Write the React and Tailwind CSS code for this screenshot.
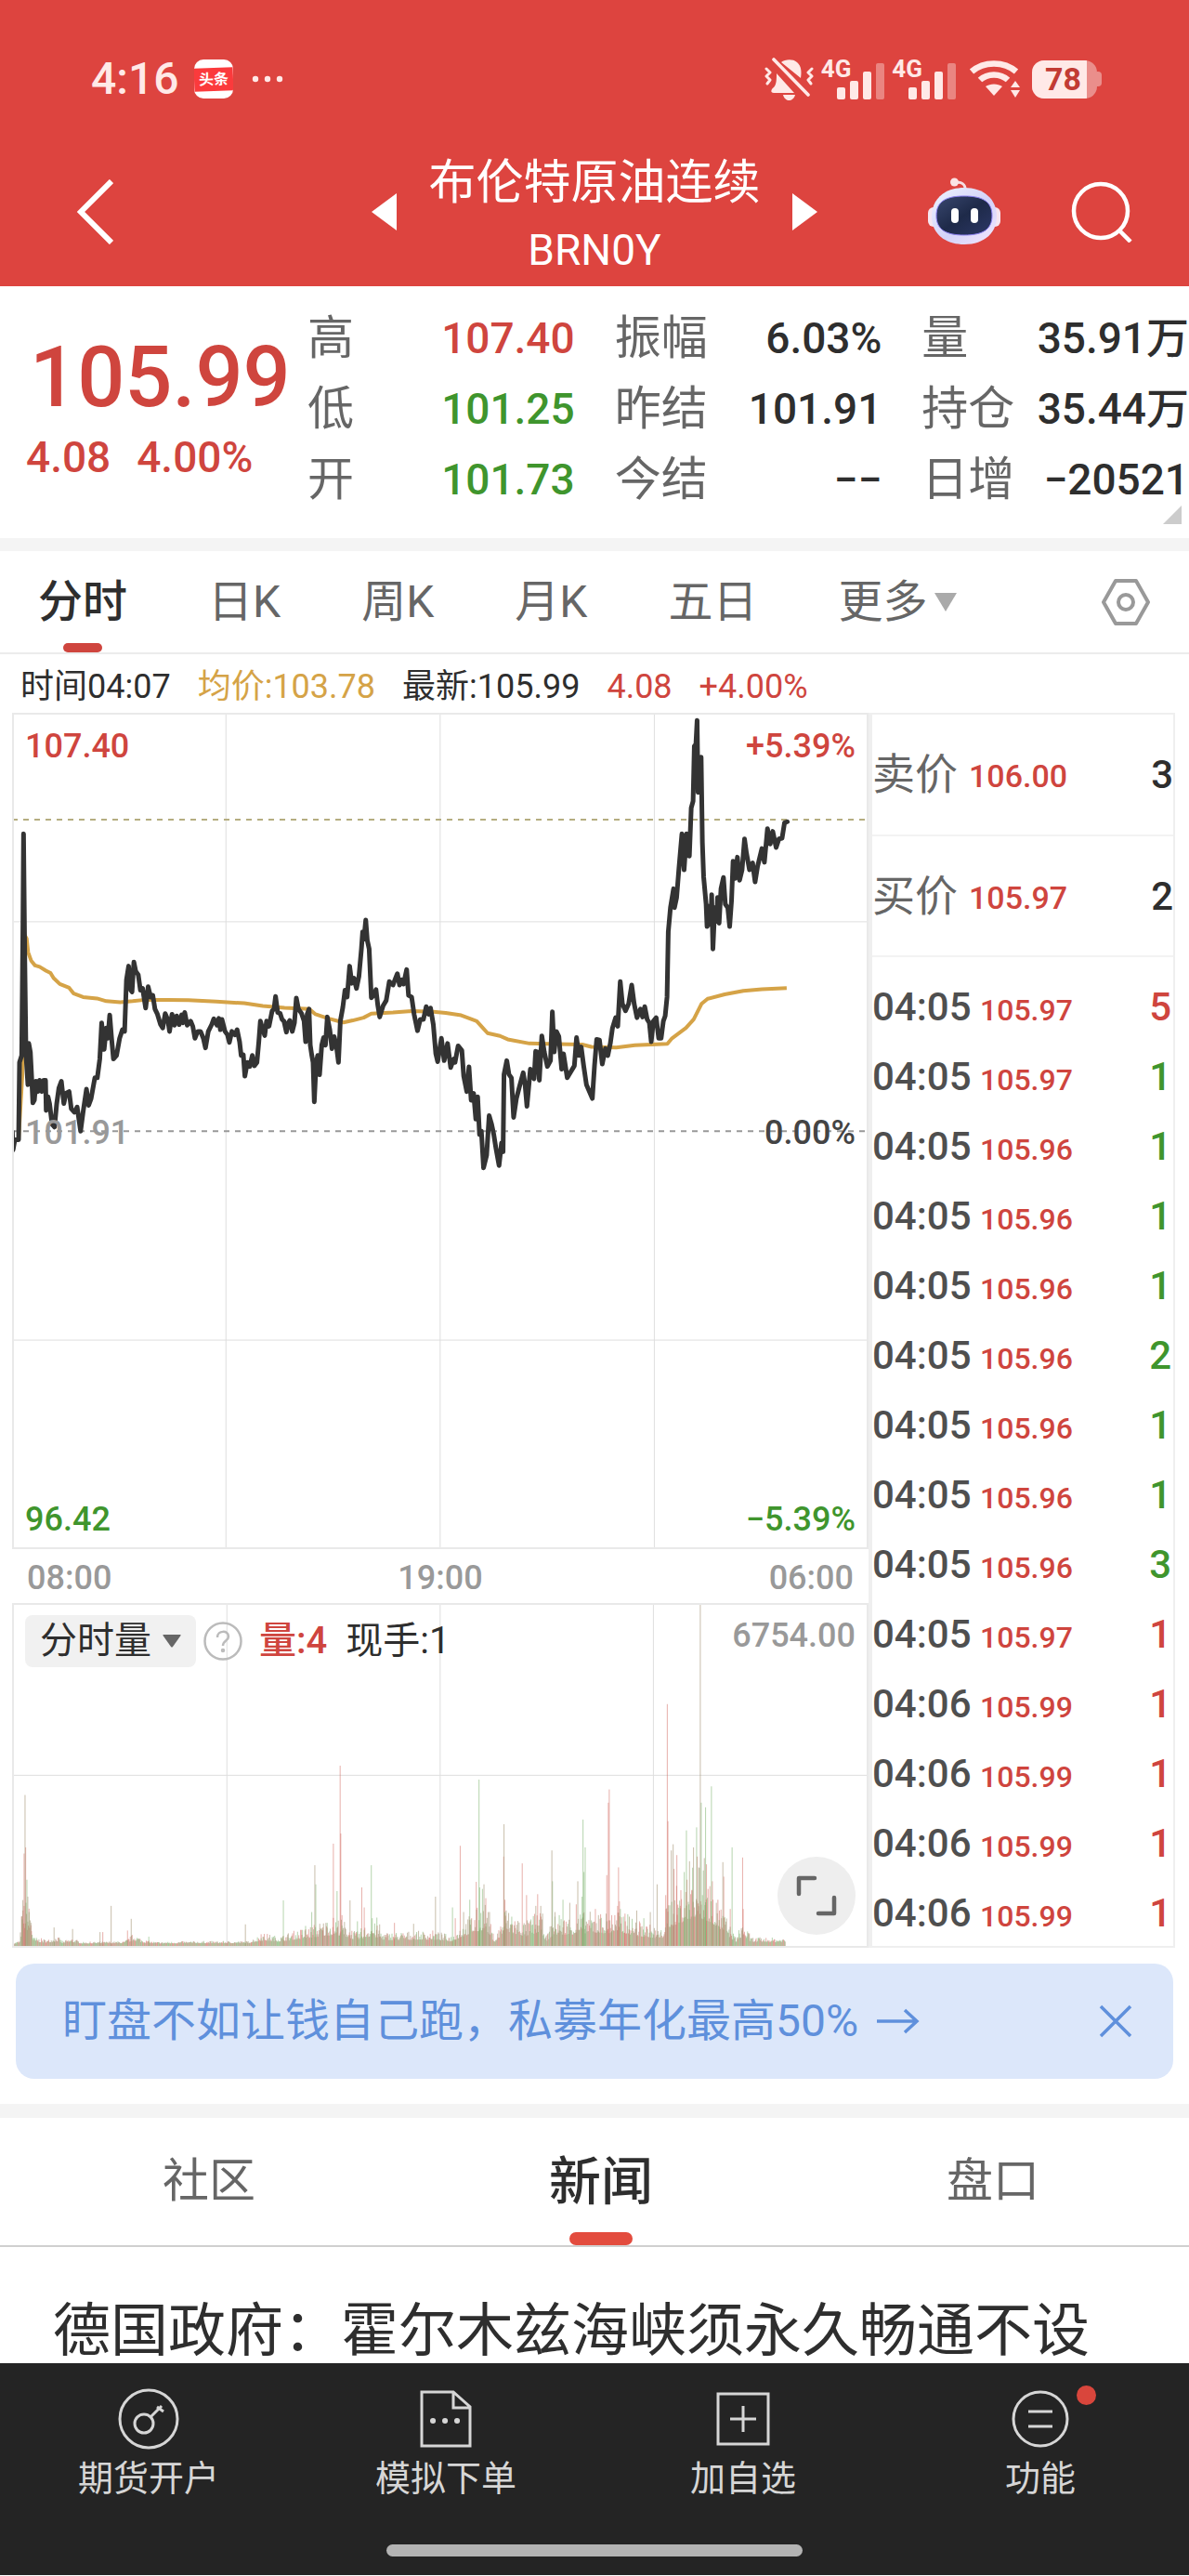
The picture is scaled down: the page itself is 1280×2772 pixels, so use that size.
import { useState, useMemo } from 'react'
import { clsx } from 'clsx'

const STATS = [
  [
    { label: '高', value: '107.40', tone: 'up' },
    { label: '低', value: '101.25', tone: 'down' },
    { label: '开', value: '101.73', tone: 'down' },
  ],
  [
    { label: '振幅', value: '6.03%' },
    { label: '昨结', value: '101.91' },
    { label: '今结', value: '−−' },
  ],
  [
    { label: '量', value: '35.91万' },
    { label: '持仓', value: '35.44万' },
    { label: '日增', value: '−20521' },
  ],
]

const PERIODS = ['分时', '日K', '周K', '月K', '五日']

const QUOTES = [
  { label: '卖价', price: '106.00', qty: 3 },
  { label: '买价', price: '105.97', qty: 2 },
]

const TICKS = [
  { time: '04:05', price: '105.97', qty: 5, tone: 'up' },
  { time: '04:05', price: '105.97', qty: 1, tone: 'down' },
  { time: '04:05', price: '105.96', qty: 1, tone: 'down' },
  { time: '04:05', price: '105.96', qty: 1, tone: 'down' },
  { time: '04:05', price: '105.96', qty: 1, tone: 'down' },
  { time: '04:05', price: '105.96', qty: 2, tone: 'down' },
  { time: '04:05', price: '105.96', qty: 1, tone: 'down' },
  { time: '04:05', price: '105.96', qty: 1, tone: 'down' },
  { time: '04:05', price: '105.96', qty: 3, tone: 'down' },
  { time: '04:05', price: '105.97', qty: 1, tone: 'up' },
  { time: '04:06', price: '105.99', qty: 1, tone: 'up' },
  { time: '04:06', price: '105.99', qty: 1, tone: 'up' },
  { time: '04:06', price: '105.99', qty: 1, tone: 'up' },
  { time: '04:06', price: '105.99', qty: 1, tone: 'up' },
]

const TONES = {
  up: 'text-[#cf453e]',
  down: 'text-[#3f952d]',
}

const PRICE_LINE =
  '42,1402 44,1455 50,1425 62,1425 65,1200 72,1180 76,800 78,535 82,900 86,1180 92,1265 95,1145 100,1170 104,1240 108,1318 113,1310 118,1255 124,1285 130,1252 137,1285 143,1252 149,1252 151,1340 157,1300 162,1320 170,1380 178,1388 185,1320 192,1275 200,1255 208,1320 215,1290 225,1285 232,1335 242,1345 251,1330 262,1400 270,1345 281,1278 288,1325 296,1305 308,1245 316,1245 324,1190 330,1085 338,1162 345,1100 350,1130 356,1062 362,1130 368,1190 378,1180 388,1130 397,1105 404,1110 410,960 417,920 424,990 428,995 434,908 440,935 448,945 455,990 462,985 472,1042 480,980 488,1010 495,1005 502,1045 510,1060 520,1090 527,1100 535,1058 543,1075 549,1110 557,1060 565,1092 572,1065 580,1090 588,1062 592,1085 598,1055 606,1092 617,1080 624,1095 631,1130 640,1110 649,1110 658,1130 665,1158 674,1110 685,1090 692,1073 702,1092 708,1072 713,1105 718,1075 728,1110 736,1120 742,1142 750,1110 760,1120 767,1105 775,1140 780,1180 787,1178 792,1240 800,1200 808,1212 816,1180 823,1210 831,1200 837,1140 842,1080 850,1105 856,1122 862,1080 870,1095 880,1050 886,1045 891,1008 898,1055 906,1058 912,1075 918,1080 926,1112 932,1085 937,1078 945,1110 952,1085 958,1013 965,1045 975,1058 983,1080 988,1140 993,1060 999,1045 1003,1150 1008,1180 1012,1200 1016,1315 1022,1200 1027,1180 1033,1236 1040,1150 1046,1128 1052,1150 1058,1068 1066,1105 1073,1160 1080,1125 1087,1150 1094,1200 1100,1080 1108,1040 1115,990 1122,1010 1130,920 1137,970 1144,955 1152,985 1160,950 1168,870 1172,820 1176,842 1182,786 1187,845 1193,870 1200,1012 1208,1005 1215,988 1221,1035 1227,1068 1238,1035 1248,1020 1258,965 1270,975 1277,958 1284,942 1291,975 1298,960 1304,972 1314,930 1320,1005 1330,1010 1338,1060 1349,1108 1358,1075 1368,1075 1377,1038 1385,1060 1391,1042 1400,1090 1408,1175 1414,1198 1426,1130 1435,1195 1446,1145 1456,1215 1466,1190 1470,1200 1480,1152 1492,1165 1498,1240 1508,1285 1515,1213 1522,1310 1530,1290 1537,1365 1543,1300 1549,1410 1555,1400 1562,1507 1572,1470 1580,1355 1588,1380 1595,1410 1602,1450 1612,1500 1620,1435 1625,1460 1628,1235 1637,1195 1644,1235 1652,1245 1659,1360 1668,1305 1678,1270 1690,1230 1696,1265 1702,1328 1713,1220 1725,1248 1730,1168 1737,1170 1742,1252 1750,1123 1758,1170 1768,1212 1778,1195 1784,1053 1790,1170 1797,1110 1805,1125 1814,1220 1820,1175 1832,1245 1845,1225 1855,1210 1862,1128 1870,1180 1877,1155 1885,1210 1894,1265 1913,1305 1920,1210 1927,1133 1936,1135 1945,1205 1955,1160 1963,1180 1971,1145 1978,1100 1988,1070 1995,1095 2003,965 2010,1030 2020,1050 2030,1030 2040,975 2048,1030 2057,1070 2068,1045 2075,1068 2082,1038 2090,1075 2097,1085 2103,1140 2110,1080 2119,1070 2127,1130 2135,1130 2142,1080 2148,1065 2154,1010 2158,820 2165,750 2175,695 2178,750 2185,720 2192,640 2202,535 2209,640 2217,535 2226,600 2232,460 2238,440 2242,280 2247,275 2251,205 2254,415 2264,312 2268,560 2272,660 2280,740 2283,805 2291,745 2295,800 2298,712 2302,870 2308,750 2314,790 2317,720 2322,795 2328,695 2336,662 2342,740 2350,750 2356,805 2362,730 2367,615 2374,665 2381,603 2388,670 2396,640 2404,550 2410,590 2420,640 2430,620 2438,675 2446,630 2460,578 2468,618 2478,520 2487,565 2495,528 2506,575 2515,550 2525,548 2533,503 2542,500'

const AVERAGE_LINE =
  '62,1425 74,1240 82,830 88,840 93,880 103,905 115,918 130,922 150,933 165,940 175,955 195,972 225,983 240,1000 270,1010 315,1014 345,1022 390,1025 430,1022 470,1018 540,1018 610,1019 700,1023 790,1028 850,1036 920,1041 1000,1045 1020,1060 1060,1072 1110,1084 1140,1078 1175,1070 1200,1058 1270,1055 1330,1051 1400,1053 1440,1056 1490,1063 1540,1080 1555,1095 1575,1115 1615,1123 1640,1133 1710,1145 1800,1147 1880,1148 1910,1155 1990,1157 2050,1150 2155,1146 2170,1130 2215,1100 2240,1075 2265,1030 2285,1015 2340,1002 2400,992 2460,987 2540,984'

// [x, height, r = up / g = down / t = mixed]
const VOLUME_SPIKES = [
  [66, 95, 'r'], [70, 115, 'r'], [74, 300, 'r'], [77, 490, 't'], [79, 320, 'r'], [83, 215, 'g'], [86, 160, 't'], [90, 110, 'g'],
  [96, 75, 't'], [171, 60, 't'], [231, 55, 't'], [320, 45, 't'], [329, 45, 'r'], [356, 130, 't'], [409, 50, 'r'], [421, 88, 't'],
  [478, 30, 'g'], [791, 70, 't'], [842, 38, 'r'], [914, 148, 'g'], [986, 65, 'g'], [1006, 110, 'g'], [1016, 262, 't'], [1019, 200, 'g'],
  [1042, 60, 'r'], [1056, 75, 'g'], [1076, 332, 'r'], [1088, 178, 'g'], [1098, 585, 'r'], [1100, 365, 'r'], [1104, 100, 'r'],
  [1130, 148, 't'], [1154, 80, 'g'], [1168, 190, 'r'], [1176, 125, 'r'], [1199, 262, 'g'], [1202, 90, 'g'], [1217, 92, 'g'],
  [1226, 70, 't'], [1274, 75, 'r'], [1336, 72, 't'], [1407, 160, 't'], [1462, 125, 'g'], [1471, 90, 'r'], [1487, 325, 'r'],
  [1498, 110, 't'], [1518, 150, 'g'], [1539, 208, 'r'], [1548, 540, 'g'], [1550, 190, 'g'], [1559, 185, 'g'], [1564, 200, 't'],
  [1570, 155, 'r'], [1582, 110, 't'], [1629, 395, 't'], [1628, 290, 'r'], [1632, 150, 'r'], [1636, 115, 't'], [1654, 95, 'g'],
  [1688, 268, 'r'], [1702, 165, 'r'], [1732, 130, 't'], [1738, 168, 'r'], [1749, 95, 'r'], [1784, 310, 't'], [1786, 210, 'g'],
  [1794, 110, 't'], [1808, 100, 'g'], [1820, 150, 'g'], [1842, 140, 't'], [1863, 135, 'r'], [1868, 210, 't'], [1882, 160, 'g'],
  [1885, 410, 'g'], [1888, 240, 'g'], [1892, 320, 'g'], [1925, 120, 'r'], [1935, 100, 't'], [1962, 230, 'r'], [1967, 465, 'r'],
  [1970, 508, 'r'], [1978, 100, 'r'], [1997, 130, 'r'], [2000, 255, 'r'], [2003, 145, 'r'], [2021, 105, 'r'], [2035, 95, 't'],
  [2059, 115, 't'], [2082, 90, 'g'], [2103, 110, 't'], [2125, 200, 't'], [2153, 165, 'r'], [2158, 785, 'r'], [2160, 405, 'r'],
  [2171, 310, 't'], [2177, 330, 't'], [2180, 250, 'r'], [2189, 295, 'r'], [2200, 130, 'r'], [2213, 240, 'g'], [2220, 375, 'g'],
  [2230, 275, 't'], [2238, 180, 'r'], [2243, 320, 't'], [2253, 385, 'g'], [2255, 290, 'r'], [2260, 255, 't'], [2265, 1108, 't'],
  [2268, 465, 'g'], [2275, 245, 'g'], [2278, 285, 't'], [2282, 450, 'g'], [2285, 265, 'r'], [2301, 518, 'g'], [2306, 150, 'r'],
  [2317, 140, 't'], [2327, 115, 'r'], [2338, 272, 't'], [2341, 225, 'r'], [2362, 120, 'r'], [2368, 320, 'g'], [2402, 287, 'r'],
  [2404, 120, 'r'],
]

// [x, typical bar height around that minute]
const VOLUME_ENVELOPE = [
  [41, 4], [60, 10], [70, 120], [96, 90], [104, 18], [150, 12], [180, 22], [200, 8], [230, 16], [260, 6], [400, 8], [430, 28],
  [460, 12], [500, 6], [600, 8], [800, 8], [850, 28], [900, 20], [950, 34], [1000, 46], [1080, 70], [1110, 60], [1150, 30],
  [1200, 60], [1240, 30], [1400, 34], [1460, 22], [1500, 60], [1570, 110], [1590, 36], [1600, 15], [1632, 90], [1700, 56],
  [1750, 95], [1765, 20], [1790, 70], [1850, 70], [1880, 80], [1980, 80], [2000, 90], [2060, 60], [2100, 50], [2140, 36],
  [2162, 120], [2250, 200], [2300, 160], [2360, 50], [2380, 16], [2402, 60], [2430, 18], [2542, 16],
]

function buildVolumePaths() {
  const paths = { r: '', g: '', t: '' }
  const floor = 1107
  let seed = 7
  const rand = () => {
    seed = (seed * 16807) % 2147483647
    return seed / 2147483647
  }
  const envelope = (x) => {
    const i = VOLUME_ENVELOPE.findIndex(([px]) => px >= x)
    if (i <= 0) return VOLUME_ENVELOPE[0][1]
    const [x0, h0] = VOLUME_ENVELOPE[i - 1]
    const [x1, h1] = VOLUME_ENVELOPE[i]
    return h0 + ((h1 - h0) * (x - x0)) / (x1 - x0)
  }
  for (let x = 42; x < 2542; x += 2) {
    const r = rand()
    const h = Math.round(5 + envelope(x) * (0.45 + 0.9 * r * r))
    const pick = rand()
    const key = pick < 0.38 ? 'r' : pick < 0.68 ? 'g' : 't'
    paths[key] += `M${x - 41} ${floor}v-${h}`
  }
  VOLUME_SPIKES.forEach(([x, h, key]) => {
    paths[key] += `M${x - 41} ${floor}v-${Math.min(h, floor)}`
  })
  return paths
}

function SignalIcon() {
  return (
    <div className="flex items-start">
      <span className="text-[26px] leading-[22px] font-bold">4G</span>
      <svg viewBox="0 0 52 44" className="-ml-4 w-[52px] h-11" aria-hidden="true">
        <g fill="currentColor">
          <rect x="1" y="31" width="9" height="13" rx="2" />
          <rect x="15" y="24" width="9" height="20" rx="2" />
          <rect x="29" y="14" width="9" height="30" rx="2" />
          <rect x="43" y="5" width="9" height="39" rx="2" opacity="0.4" />
        </g>
      </svg>
    </div>
  )
}

function StatusBar() {
  return (
    <div className="flex items-center justify-between h-[58px] pl-[98px] pr-[94px] text-[#ffe9e7]">
      <div className="flex items-center">
        <span className="text-5xl font-medium">4:16</span>
        <span className="ml-4 w-[42px] h-[42px] rounded-[10px] bg-white overflow-hidden flex items-center">
          <span className="w-full h-[25px] -rotate-2 bg-[#fb3a3c] text-white text-[16px] leading-[25px] text-center font-bold">头条</span>
        </span>
        <svg viewBox="0 0 34 8" className="ml-5 w-[34px] h-2" fill="currentColor" aria-hidden="true">
          <circle cx="4" cy="4" r="3.2" />
          <circle cx="17" cy="4" r="3.2" />
          <circle cx="30" cy="4" r="3.2" />
        </svg>
      </div>
      <div className="flex items-center">
        {/* Muted bell */}
        <svg viewBox="0 0 53 46" className="w-[53px] h-[46px]" fill="none" stroke="currentColor" aria-hidden="true">
          <path fill="currentColor" stroke="none" d="M18 5C22 2 30 1 35 5C40 9 40 16 39 22ZM13 17L32 38H10C6 38 7 34 10 32C13 29 13 23 13 17ZM20 40H33C32 44 29 46 26.500 46C24 46 21 44 20 40Z" />
          <path strokeWidth="3.600" strokeLinecap="round" d="M10 2L47 40" />
          <path strokeWidth="3" strokeLinecap="round" strokeLinejoin="round" d="M2 12L6 16L2 20L6 24L3 28M51 12L47 16L51 20L47 24L50 28" />
        </svg>
        <div className="ml-2"><SignalIcon /></div>
        <div className="ml-2"><SignalIcon /></div>
        <svg viewBox="0 0 56 40" className="ml-3.5 w-14 h-10" aria-hidden="true">
          <g fill="none" stroke="currentColor" strokeWidth="6.500">
            <path d="M3 12C16 0.500 38 0.500 51 12" />
            <path d="M12 21C20 13.500 34 13.500 42 21" />
          </g>
          <path fill="currentColor" d="M18 28C23 24.500 31 24.500 36 28L27 38Z" />
          <path fill="currentColor" d="M45 29L50 22L55 29ZM45 32H55L50 40Z" />
        </svg>
        <div className="ml-3 flex items-center">
          <div className="w-[70px] h-[41px] rounded-[13px] overflow-hidden flex bg-white/40">
            <span className="w-[59px] bg-[#ffe9e7] text-[#c23b34] text-[34px] leading-[41px] font-bold text-center pl-2">78</span>
          </div>
          <span className="w-[5px] h-4 rounded-r-[4px] bg-white/40" />
        </div>
      </div>
    </div>
  )
}

function RobotIcon() {
  return (
    <svg viewBox="0 0 78 74" className="w-[78px] h-[74px]" aria-hidden="true">
      <defs>
        <linearGradient id="robotHead" x1="0" y1="0" x2="1" y2="1">
          <stop offset="0" stopColor="#eef3ff" />
          <stop offset="0.55" stopColor="#d3d3f8" />
          <stop offset="1" stopColor="#f4e8ff" />
        </linearGradient>
        <linearGradient id="robotFace" x1="0" y1="0" x2="1" y2="1">
          <stop offset="0" stopColor="#39476f" />
          <stop offset="0.5" stopColor="#1e2a49" />
          <stop offset="1" stopColor="#2c3766" />
        </linearGradient>
      </defs>
      <path d="M40 14C41 7 35 4 30 6" fill="none" stroke="#f5dfe4" strokeWidth="3" />
      <circle cx="28.500" cy="5" r="4.500" fill="#fbe3e4" />
      <rect x="0" y="32" width="12" height="21" rx="6" fill="#f6e6f0" />
      <rect x="66" y="32" width="12" height="21" rx="6" fill="#f6e6f0" />
      <path d="M39 11C60 11 74 23 74 42C74 60 60 72 39 72C18 72 4 60 4 42C4 23 18 11 39 11Z" fill="url(#robotHead)" />
      <path d="M39 20C59 20 69 26 69 41C69 56 59 62 39 62C19 62 9 56 9 41C9 26 19 20 39 20Z" fill="url(#robotFace)" stroke="#8a7ff0" strokeWidth="1" />
      <rect x="25" y="33" width="8" height="16" rx="4" fill="#fff" />
      <rect x="46" y="33" width="8" height="16" rx="4" fill="#fff" />
    </svg>
  )
}

function TitleBar() {
  return (
    <div className="mt-[34px] h-[160px] grid grid-cols-[1fr_480px_1fr] items-center">
      <button aria-label="返回" className="justify-self-start ml-[82px]">
        <svg viewBox="0 0 40 70" className="w-10 h-[70px]" fill="none" stroke="currentColor" strokeWidth="6" aria-hidden="true">
          <path d="M38 2L5 35L38 68" />
        </svg>
      </button>
      <div className="flex items-center justify-between">
        <button aria-label="上一个">
          <svg viewBox="0 0 27 40" className="w-[27px] h-10" fill="currentColor" aria-hidden="true"><path d="M27 0V40L0 20Z" /></svg>
        </button>
        <h1 className="pt-2.5 text-center">
          <span className="block text-[51px] leading-[73px]">布伦特原油连续</span>
          <span className="block text-[46px] leading-[73px]">BRN0Y</span>
        </h1>
        <button aria-label="下一个">
          <svg viewBox="0 0 27 40" className="w-[27px] h-10" fill="currentColor" aria-hidden="true"><path d="M0 0V40L27 20Z" /></svg>
        </button>
      </div>
      <div className="flex items-center justify-end gap-[76px] pr-[61px]">
        <button aria-label="智能助手"><RobotIcon /></button>
        <button aria-label="搜索">
          <svg viewBox="0 0 66 66" className="w-[66px] h-[66px]" fill="none" stroke="currentColor" strokeWidth="4.500" aria-hidden="true">
            <circle cx="32" cy="32" r="29" />
            <path d="M51 52L64 65" />
          </svg>
        </button>
      </div>
    </div>
  )
}

function QuoteSummary() {
  return (
    <section className="relative h-[271px] pt-[18px] flex font-medium">
      <div className="w-[331px] shrink-0 pl-7 text-[#cf453e]">
        <div className="mt-[26px] pl-1 text-[90px] leading-[110px]">105.99</div>
        <div className="flex gap-[28px] text-[46px] leading-[60px]">
          <span>4.08</span>
          <span>4.00%</span>
        </div>
      </div>
      <div className="flex-1 grid grid-cols-3 gap-x-[43px]">
        {STATS.map((column) => (
          <dl key={column[0].label}>
            {column.map((item) => (
              <div key={item.label} className="flex items-center justify-between h-[76px] whitespace-nowrap">
                <dt className="text-[50px] font-normal text-[#666]">{item.label}</dt>
                <dd className={clsx('text-[46px]', item.tone ? TONES[item.tone] : 'text-[#2e2e2e]')}>{item.value}</dd>
              </div>
            ))}
          </dl>
        ))}
      </div>
      <svg viewBox="0 0 20 20" className="absolute right-2 bottom-[15px] w-5 h-5" aria-hidden="true">
        <path d="M20 0V20H0Z" fill="#ccc" />
      </svg>
    </section>
  )
}

function PeriodTabs() {
  const [active, setActive] = useState('分时')

  return (
    <nav className="h-[111px] pl-[41px] pr-[42px] flex items-stretch gap-[87px] border-b-2 border-[#ececec] text-5xl text-[#666] whitespace-nowrap">
      {PERIODS.map((name) => (
        <button
          key={name}
          onClick={() => setActive(name)}
          className={clsx('relative', active === name && 'font-medium text-[#2e2e2e]')}
        >
          {name}
          {active === name && (
            <span className="absolute bottom-0 left-1/2 -translate-x-1/2 w-[42px] h-2.5 rounded-[5px] bg-[#cf453e]" />
          )}
        </button>
      ))}
      <button className="flex items-center gap-2">
        更多
        <svg viewBox="0 0 24 20" className="w-6 h-5" aria-hidden="true"><path d="M0 0H24L12 20Z" fill="#aaa" /></svg>
      </button>
      <button aria-label="设置" className="ml-auto">
        <svg viewBox="0 0 52 50" className="w-[52px] h-[50px]" fill="none" stroke="#999" strokeWidth="4" strokeLinejoin="round" aria-hidden="true">
          <path d="M15 2H37L50 25L37 48H15L2 25Z" />
          <circle cx="26" cy="25" r="8" />
        </svg>
      </button>
    </nav>
  )
}

function PriceChart() {
  return (
    <div className="relative h-[900px] text-4xl font-medium">
      <svg viewBox="41 183 2763 2433" preserveAspectRatio="none" className="absolute inset-0 w-full h-full" fill="none" aria-label="分时走势">
        <g stroke="#dedede" strokeWidth="1">
          <path vectorEffect="non-scaling-stroke" d="M731 183V2616M1422 183V2616M2113 183V2616M41 791H2804M41 2008H2804" />
        </g>
        <path vectorEffect="non-scaling-stroke" stroke="#b5ad80" strokeWidth="2" strokeDasharray="6 6" d="M41 494H2804" />
        <path vectorEffect="non-scaling-stroke" stroke="#999" strokeWidth="2" strokeDasharray="6 6" d="M41 1400H2804" />
        <polyline vectorEffect="non-scaling-stroke" stroke="#d5a347" strokeWidth="4" strokeLinejoin="round" points={AVERAGE_LINE} />
        <polyline vectorEffect="non-scaling-stroke" stroke="#333" strokeWidth="5" strokeLinejoin="round" strokeLinecap="round" points={PRICE_LINE} />
      </svg>
      <div className="relative h-full px-3 flex flex-col justify-between border-2 border-[#e9e9e9]">
        <div className="flex justify-between pt-2.5 leading-[48px] text-[#cf453e]">
          <span>107.40</span>
          <span>+5.39%</span>
        </div>
        <div className="flex justify-between leading-[48px]">
          <span className="text-[#999]">101.91</span>
          <span className="text-[#444]">0.00%</span>
        </div>
        <div className="flex justify-between pb-1.5 leading-[48px] text-[#3f952d]">
          <span>96.42</span>
          <span>−5.39%</span>
        </div>
      </div>
    </div>
  )
}

function VolumeChart() {
  const paths = useMemo(buildVolumePaths, [])

  return (
    <div className="relative h-[371px] border-2 border-[#e9e9e9]">
      <svg viewBox="0 0 2763 1107" preserveAspectRatio="none" className="absolute inset-0 w-full h-full" fill="none" aria-label="分时成交量">
        <path vectorEffect="non-scaling-stroke" stroke="#dedede" strokeWidth="1" d="M690 0V1107M1381 0V1107M2072 0V1107M0 553H2763" />
        <path stroke="#cf5f55" strokeOpacity="0.5" strokeWidth="3" d={paths.r} />
        <path stroke="#6aa85a" strokeOpacity="0.5" strokeWidth="3" d={paths.g} />
        <path stroke="#a08f70" strokeOpacity="0.6" strokeWidth="3" d={paths.t} />
      </svg>
      <div className="relative pl-3 pr-3 pt-[11px] flex items-center text-[40px] leading-[56px]">
        <button className="h-14 px-4 flex items-center gap-3 rounded-lg bg-[#f1f1f1] text-[#2e2e2e]">
          分时量
          <svg viewBox="0 0 20 14" className="w-5 h-3.5" aria-hidden="true"><path d="M1 0H19Q20 0 19.500 1L11 13Q10 14 9 13L0.500 1Q0 0 1 0Z" fill="#666" /></svg>
        </button>
        <button aria-label="说明" className="ml-2">
          <svg viewBox="0 0 42 42" className="w-[42px] h-[42px]" fill="none" stroke="#bbb" strokeWidth="2.500" aria-hidden="true">
            <circle cx="21" cy="21" r="19.500" />
            <path d="M15 17C15 9 27 9 27 16C27 21 21 20 21 26" />
            <circle cx="21" cy="31" r="1" />
          </svg>
        </button>
        <span className="ml-[18px] font-medium text-[#cf453e]">量:4</span>
        <span className="ml-5 text-[#2e2e2e]">现手:1</span>
        <span className="ml-auto mb-3 text-4xl font-medium text-[#999]">6754.00</span>
      </div>
      <button aria-label="全屏" className="absolute right-3 bottom-3 w-[84px] h-[84px] rounded-full bg-[#eee] flex items-center justify-center">
        <svg viewBox="0 0 44 44" className="w-11 h-11" fill="none" stroke="#666" strokeWidth="4.500" strokeLinejoin="round" strokeLinecap="round" aria-hidden="true">
          <path d="M3 20V3H20M41 24V41H24" />
        </svg>
      </button>
    </div>
  )
}

function TradePanel() {
  return (
    <aside className="w-[330px] shrink-0 mr-[15px] border-2 border-l-4 border-[#efefef]">
      <table className="w-full">
        <tbody>
          {QUOTES.map((quote) => (
            <tr key={quote.label} className="h-[130px] border-b-2 border-[#f3f3f3]">
              <th scope="row" className="w-[104px] text-left align-middle text-[46px] font-normal text-[#666]">{quote.label}</th>
              <td className="pt-1 text-[34px] font-medium text-[#cf453e]">{quote.price}</td>
              <td className="text-right text-[42px] font-medium text-[#2e2e2e]">{quote.qty}</td>
            </tr>
          ))}
        </tbody>
      </table>
      <table className="w-full mt-3.5 font-medium">
        <tbody>
          {TICKS.map((tick, i) => (
            <tr key={i} className="h-[75px] leading-[60px]">
              <td className="w-[116px] p-0 pt-2.5 align-baseline text-[42px] text-[#4f4f4f]">{tick.time}</td>
              <td className="p-0 align-baseline text-[32px] text-[#cf453e]">{tick.price}</td>
              <td className={clsx('p-0 pr-0.5 align-baseline text-right text-[42px]', TONES[tick.tone])}>{tick.qty}</td>
            </tr>
          ))}
        </tbody>
      </table>
    </aside>
  )
}

function Banner() {
  const [open, setOpen] = useState(true)
  if (!open) return null

  return (
    <div className="mt-[17px] mx-[17px] h-[124px] pl-[50px] pr-11 rounded-[20px] bg-[#dce7fa] flex items-center justify-between text-[#5f90dc]">
      <a href="#fund" className="flex items-center gap-5 text-5xl">
        盯盘不如让钱自己跑，私募年化最高50%
        <svg viewBox="0 0 46 28" className="w-[46px] h-7" fill="none" stroke="currentColor" strokeWidth="3.500" aria-hidden="true">
          <path d="M0 14H43M30 2L43 14L30 26" />
        </svg>
      </a>
      <button aria-label="关闭" onClick={() => setOpen(false)}>
        <svg viewBox="0 0 36 36" className="w-9 h-9" fill="none" stroke="currentColor" strokeWidth="3.500" aria-hidden="true">
          <path d="M2 2L34 34M34 2L2 34" />
        </svg>
      </button>
    </div>
  )
}

function ContentTabs() {
  const [active, setActive] = useState('新闻')

  return (
    <nav className="h-[139px] pl-[14px] grid grid-cols-3 border-b-2 border-[#d0d0d0]">
      {['社区', '新闻', '盘口'].map((name) => (
        <button
          key={name}
          onClick={() => setActive(name)}
          className={clsx('relative', active === name ? 'text-[56px] font-medium text-[#2e2e2e]' : 'text-[50px] text-[#666]')}
        >
          {name}
          {active === name && (
            <span className="absolute bottom-0 left-1/2 -translate-x-1/2 w-[68px] h-3.5 rounded-[7px] bg-[#e34c3e]" />
          )}
        </button>
      ))}
    </nav>
  )
}

const NAV_ITEMS = [
  {
    label: '期货开户',
    icon: (
      <>
        <circle cx="32" cy="32" r="31" />
        <circle cx="27" cy="37" r="10" />
        <path d="M34 30L46 18M41 19L48 24" />
      </>
    ),
  },
  {
    label: '模拟下单',
    icon: (
      <>
        <path d="M6 3H40L58 19V61H6ZM40 3V20H58" />
        <path strokeWidth="6" strokeLinecap="round" d="M18 34H18.100M31 34H31.100M44 34H44.100" />
      </>
    ),
  },
  {
    label: '加自选',
    icon: (
      <>
        <rect x="5" y="5" width="54" height="54" />
        <path d="M32 18V46M18 32H46" />
      </>
    ),
  },
  {
    label: '功能',
    badge: true,
    icon: (
      <>
        <circle cx="32" cy="32" r="29" />
        <path d="M19 24H45M19 40H45" />
      </>
    ),
  },
]

function BottomBar() {
  return (
    <footer className="h-[228px] pt-7 bg-[#242424] text-[#d6d6d6]">
      <div className="grid grid-cols-4">
        {NAV_ITEMS.map((item) => (
          <button key={item.label} className="flex flex-col items-center">
            <span className="relative">
              <svg viewBox="0 0 64 64" className="w-16 h-16 overflow-visible" fill="none" stroke="currentColor" strokeWidth="3" aria-hidden="true">
                {item.icon}
              </svg>
              {item.badge && <span className="absolute -top-1 -right-7 w-[21px] h-[21px] rounded-full bg-[#d9463c]" />}
            </span>
            <span className="mt-1 text-[38px] leading-[56px]">{item.label}</span>
          </button>
        ))}
      </div>
      <div className="mt-[43px] mx-auto w-[448px] h-[13px] rounded-full bg-[#b3b3b3]" />
    </footer>
  )
}

export default function App() {
  return (
    <div className="w-full bg-white overflow-hidden font-['Roboto','Noto_Sans_CJK_SC',sans-serif]">
      <header className="pt-14 bg-[#dd443f] text-white">
        <StatusBar />
        <TitleBar />
      </header>

      <QuoteSummary />
      <div className="h-3.5 bg-[#f4f4f4]" />
      <PeriodTabs />

      {/* Latest minute */}
      <div className="h-[63px] pt-1.5 pl-[22px] flex items-center gap-[29px] text-4xl whitespace-nowrap text-[#2e2e2e]">
        <span>时间04:07</span>
        <span className="text-[#d5a347]">均价:103.78</span>
        <span>最新:105.99</span>
        <span className="text-[#cf453e]">4.08</span>
        <span className="text-[#cf453e]">+4.00%</span>
      </div>

      <div className="flex">
        <div className="flex-1 min-w-0 pl-[13px]">
          <PriceChart />
          <div className="h-[58px] pt-1 px-4 flex items-center justify-between text-4xl font-medium text-[#999]">
            <span>08:00</span>
            <span>19:00</span>
            <span>06:00</span>
          </div>
          <VolumeChart />
        </div>
        <TradePanel />
      </div>

      <Banner />
      <div className="mt-[27px] h-[15px] bg-[#f4f4f4]" />
      <ContentTabs />
      <article className="h-[125px] pl-[57px] pt-[53px]">
        <a href="#news" className="block text-[62px] leading-[76px] whitespace-nowrap text-[#2e2e2e]">德国政府：霍尔木兹海峡须永久畅通不设</a>
      </article>
      <BottomBar />
    </div>
  )
}
